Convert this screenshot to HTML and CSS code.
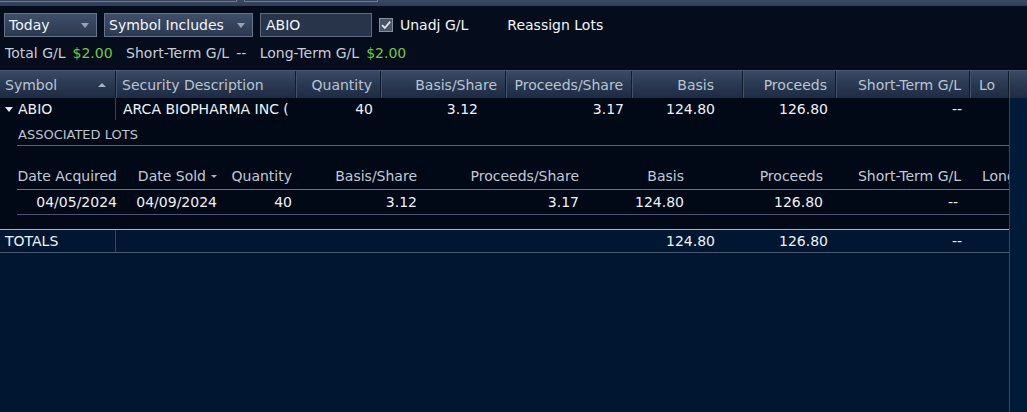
FILE: index.html
```html
<!DOCTYPE html>
<html>
<head>
<meta charset="utf-8">
<link rel="stylesheet" href="styles.css">
</head>
<body>
<div class="app">
  <div class="topstrip">
    <div class="ghost g1"></div>
    <div class="ghost g2"></div>
  </div>

  <div class="toolbar">
    <div class="select sel-today"><span>Today</span><i class="caret"></i></div>
    <div class="select sel-sym"><span>Symbol Includes</span><i class="caret"></i></div>
    <div class="input">ABIO</div>
    <label class="check">
      <span class="box"><svg width="12" height="12" viewBox="0 0 12 12"><path d="M2 6.2 L4.8 9 L10.2 2.6" fill="none" stroke="#dfe5ee" stroke-width="1.8"/></svg></span>
      <span>Unadj G/L</span>
    </label>
    <span class="link">Reassign Lots</span>
  </div>

  <div class="summary">
    <span class="lbl">Total G/L</span><span class="gain">$2.00</span>
    <span class="lbl">Short-Term G/L</span><span class="val">--</span>
    <span class="lbl">Long-Term G/L</span><span class="gain">$2.00</span>
  </div>

  <div class="grid">
    <div class="ghead">
      <div class="hc c-sym left">Symbol<i class="sort-up"></i></div>
      <div class="hc c-desc left">Security Description</div>
      <div class="hc c-qty">Quantity</div>
      <div class="hc c-bps">Basis/Share</div>
      <div class="hc c-pps">Proceeds/Share</div>
      <div class="hc c-basis">Basis</div>
      <div class="hc c-proc">Proceeds</div>
      <div class="hc c-st">Short-Term G/L</div>
      <div class="hc c-lt left">Lo</div>
      <div class="hc c-cap"></div>
    </div>

    <div class="gbody">
      <div class="gmain">
        <div class="row main-row">
          <div class="dc c-sym left sep"><i class="exp"></i>ABIO</div>
          <div class="dc c-desc left"><span class="clip">ARCA BIOPHARMA INC (NEW)</span></div>
          <div class="dc c-qty">40</div>
          <div class="dc c-bps bps-val">3.12</div>
          <div class="dc c-pps">3.17</div>
          <div class="dc c-basis">124.80</div>
          <div class="dc c-proc">126.80</div>
          <div class="dc c-st">--</div>
          <div class="dc c-lt"></div>
        </div>

        <div class="detail">
          <div class="detail-title">ASSOCIATED LOTS</div>
          <div class="lots">
            <div class="lrow lhead">
              <div class="lc l1">Date Acquired</div>
              <div class="lc l2">Date Sold<i class="sort-down"></i></div>
              <div class="lc l3">Quantity</div>
              <div class="lc l4">Basis/Share</div>
              <div class="lc l5">Proceeds/Share</div>
              <div class="lc l6">Basis</div>
              <div class="lc l7">Proceeds</div>
              <div class="lc l8">Short-Term G/L</div>
              <div class="lc l9">Long-Term G/L</div>
            </div>
            <div class="lrow ldata">
              <div class="lc l1">04/05/2024</div>
              <div class="lc l2">04/09/2024</div>
              <div class="lc l3">40</div>
              <div class="lc l4">3.12</div>
              <div class="lc l5">3.17</div>
              <div class="lc l6">124.80</div>
              <div class="lc l7">126.80</div>
              <div class="lc l8 dash">--</div>
              <div class="lc l9"></div>
            </div>
          </div>
        </div>

        <div class="row totals">
          <div class="dc c-sym left sep">TOTALS</div>
          <div class="dc c-desc"></div>
          <div class="dc c-qty"></div>
          <div class="dc c-bps"></div>
          <div class="dc c-pps"></div>
          <div class="dc c-basis">124.80</div>
          <div class="dc c-proc">126.80</div>
          <div class="dc c-st">--</div>
          <div class="dc c-lt"></div>
        </div>
        <div class="fill"></div>
      </div>
      <div class="vscroll"></div>
    </div>
  </div>
</div>
</body>
</html>
```

FILE: styles.css
```css
* { box-sizing: border-box; }
html, body {
  margin: 0;
  padding: 0;
  background: #050d1c;
}
body {
  width: 1027px;
  height: 412px;
  overflow: hidden;
  font-family: "DejaVu Sans", Verdana, sans-serif;
  font-size: 14px;
  color: #eef2f7;
}
.app {
  display: flex;
  flex-direction: column;
  height: 412px;
}

/* top strip */
.topstrip {
  height: 6px;
  flex: none;
  display: flex;
  gap: 7px;
  background: linear-gradient(#3a4a63, #2f3d55);
}
.ghost {
  height: 2px;
  border: 1px solid #6d7a90;
  border-top: none;
  background: #34435b;
}
.g1 { width: 237px; border-left: none; }
.g2 { width: 134px; }

/* toolbar */
.toolbar {
  margin-top: 7px;
  height: 24px;
  flex: none;
  display: flex;
  align-items: center;
  padding-left: 4px;
}
.select {
  height: 24px;
  display: flex;
  align-items: center;
  justify-content: space-between;
  padding: 0 7px 0 4px;
  border: 1px solid #66748a;
  background: linear-gradient(#3f4f69, #2b3950);
  color: #f3f6fa;
  margin-right: 7px;
}
.sel-today { width: 93px; }
.sel-sym { width: 149px; }
.caret {
  width: 0;
  height: 0;
  border-left: 4px solid transparent;
  border-right: 4px solid transparent;
  border-top: 5px solid #97a2b2;
}
.input {
  width: 112px;
  height: 24px;
  display: flex;
  align-items: center;
  padding-left: 5px;
  border: 1px solid #5d6a80;
  background: #27344a;
  color: #f3f6fa;
  margin-right: 7px;
}
.check {
  display: flex;
  align-items: center;
  gap: 7px;
  color: #f3f6fa;
}
.box {
  width: 14px;
  height: 14px;
  border: 1px solid #8790a0;
  background: #4a5466;
  display: flex;
  align-items: center;
  justify-content: center;
}
.link {
  margin-left: 39px;
  color: #f3f6fa;
}

/* summary */
.summary {
  margin-top: 8px;
  height: 16px;
  line-height: 16px;
  flex: none;
  padding-left: 5px;
  color: #c6ceda;
  white-space: nowrap;
}
.summary .lbl { margin-right: 7px; }
.summary .gain { color: #74c83c; margin-right: 9px; }
.summary .val { margin-right: 9px; }

/* grid */
.grid {
  margin-top: 9px;
  flex: 1;
  display: flex;
  flex-direction: column;
  min-height: 0;
}
.ghead {
  height: 28px;
  flex: none;
  display: flex;
  background: linear-gradient(#3a4a65 0%, #2a3952 50%, #1d2b43 100%);
  border-top: 1px solid #46566f;
  color: #b9c4d3;
}
.hc {
  height: 100%;
  display: flex;
  align-items: center;
  justify-content: flex-end;
  padding-right: 8px;
  border-right: 1px solid #101b2d;
  box-shadow: 1px 0 0 #41516b;
  white-space: nowrap;
  overflow: hidden;
}
.hc.left { justify-content: flex-start; padding-left: 6px; }
.hc.c-sym { padding-left: 5px; justify-content: space-between; padding-right: 9px; }
.hc.c-lt { padding-left: 9px; }
.hc.c-cap { flex: 1; border-right: none; box-shadow: none; }
.hc.c-basis, .dc.c-basis { padding-right: 28px; }

.c-sym { width: 116px; }
.c-desc { width: 180px; }
.c-qty { width: 85px; }
.c-bps { width: 125px; }
.c-pps { width: 126px; }
.c-basis { width: 111px; }
.c-proc { width: 93px; }
.c-st { width: 134px; }
.c-lt { width: 39px; }

.sort-up {
  width: 0;
  height: 0;
  border-left: 4px solid transparent;
  border-right: 4px solid transparent;
  border-bottom: 4px solid #a7b1c0;
}

.gbody {
  flex: 1;
  display: flex;
  min-height: 0;
}
.gmain {
  width: 1009px;
  display: flex;
  flex-direction: column;
  background: #020916;
}
.vscroll {
  flex: 1;
  background: #011a38;
  border-left: 1px solid #33445e;
}

.row {
  display: flex;
  height: 22px;
  flex: none;
}
.dc {
  height: 100%;
  display: flex;
  align-items: center;
  justify-content: flex-end;
  padding-right: 8px;
  white-space: nowrap;
  overflow: hidden;
}
.dc.left { justify-content: flex-start; padding-left: 5px; }
.dc.sep { border-right: 1px solid #34435a; }
.dc.c-desc.left { padding-left: 7px; padding-right: 7px; }
.clip {
  display: block;
  width: 100%;
  overflow: hidden;
  white-space: nowrap;
}
.bps-val { padding-right: 28px; }
.exp {
  width: 0;
  height: 0;
  border-left: 4px solid transparent;
  border-right: 4px solid transparent;
  border-top: 5px solid #e6ebf2;
  margin-right: 5px;
}

/* detail */
.detail {
  padding-left: 17px;
  height: 109px;
  flex: none;
}
.detail-title {
  padding-top: 7px;
  padding-left: 1px;
  height: 26px;
  line-height: 16px;
  font-size: 13px;
  color: #bcc4d0;
  border-bottom: 1px solid #566177;
}
.lots { margin-top: 22px; }
.lrow {
  display: flex;
  white-space: nowrap;
  overflow: hidden;
}
.lhead {
  height: 22px;
  line-height: 17px;
  color: #c2cad6;
  border-bottom: 1px solid #6a7488;
}
.ldata {
  height: 25px;
  line-height: 24px;
  border-bottom: 1px solid #4a5468;
}
.lc {
  flex: none;
  text-align: right;
  padding-right: 4px;
}
.l1 { width: 104px; }
.l2 { width: 100px; }
.l3 { width: 75px; }
.l4 { width: 125px; }
.l5 { width: 162px; }
.l6 { width: 105px; }
.l7 { width: 139px; }
.l8 { width: 138px; }
.l8.dash { padding-right: 7px; }
.l9 { width: 120px; text-align: left; padding-left: 17px; }
.sort-down {
  display: inline-block;
  vertical-align: middle;
  margin-left: 5px;
  margin-bottom: 2px;
  width: 0;
  height: 0;
  border-left: 3px solid transparent;
  border-right: 3px solid transparent;
  border-top: 3px solid #a8b2c0;
}

/* totals */
.totals {
  height: 24px;
  background: #011631;
  border-top: 1px solid #aab6c6;
  border-bottom: 1px solid #4a5870;
}
.fill {
  flex: 1;
  background: #011631;
}
```
